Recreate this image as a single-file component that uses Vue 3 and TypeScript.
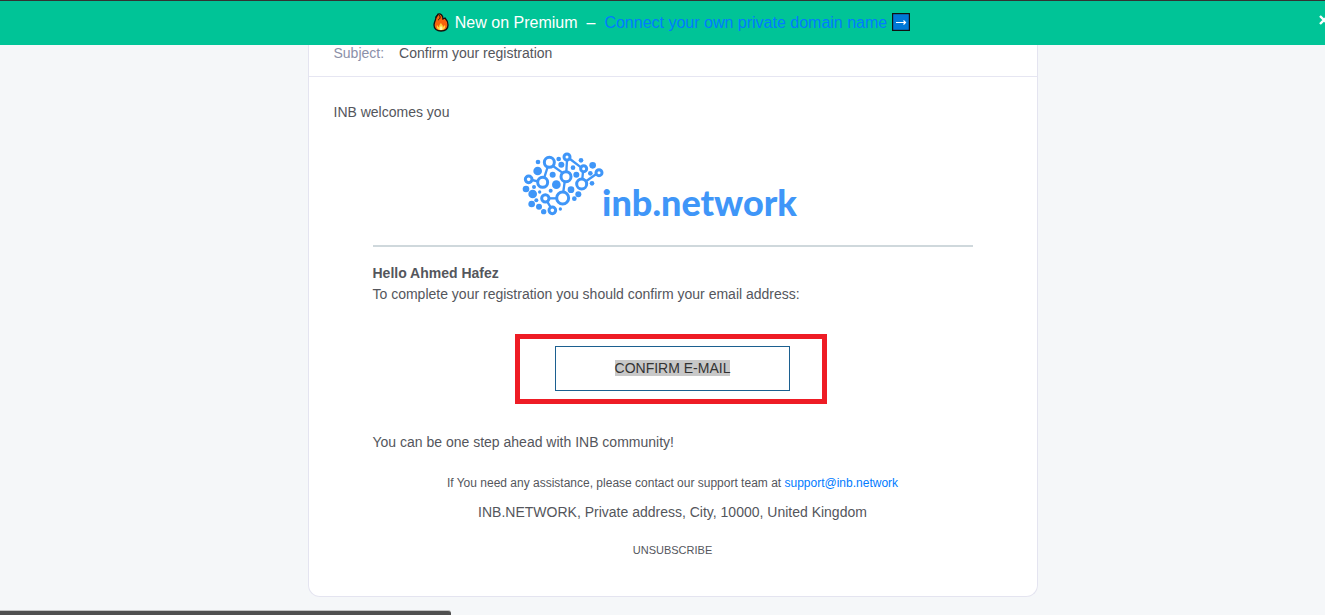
<script setup lang="ts">
type Point = [number, number, number]

const dots: Point[] = [
  [84, 66, 7], [146, 57, 7], [154, 74, 9], [83, 93, 13], [128, 104, 9],
  [139, 134, 13], [213, 61, 7], [248, 76, 10], [189, 83, 7], [199, 104, 9],
  [241, 100, 7], [246, 130, 7], [183, 149, 10], [205, 163, 9], [193, 176, 7],
  [122, 152, 6], [89, 156, 5], [72, 141, 6], [48, 147, 10], [68, 162, 13],
  [79, 181, 6], [65, 192, 10], [87, 200, 9], [101, 215, 8], [151, 207, 5],
]
const rings: Point[] = [
  [118, 67, 15], [171, 51, 9], [221, 86, 9], [267, 98, 9], [168, 110, 15],
  [215, 132, 15], [98, 127, 15], [56, 118, 10], [106, 175, 11], [158, 174, 18],
  [127, 211, 10],
]
const links: string[] = [
  'M66 120L83 124', 'M103 112L113 81', 'M129 78L157 98', 'M171 61L169 95',
  'M180 57L213 82', 'M219 95L217 117', 'M258 103L229 123', 'M164 125L160 156',
  'M117 175L140 175', 'M112 185L122 202',
]
</script>

<template>
  <div class="page">
    <aside class="banner">
      <svg class="flame" viewBox="0 0 16 19" aria-hidden="true">
        <path d="M5 1C8 0 10 3 10 6L12 5C14 7 15 10 15 12C15 16 12 18 8 18C4 18 1 16 1 12C1 9 3 7 3 4L4 3Z" fill="#f7630c" stroke="#111" stroke-width="1.3" />
        <path d="M3 5C3 2 5 1 6 2C8 4 7 6 5 7" fill="none" stroke="#111" stroke-width="1" />
        <path d="M4 12C5 13 5 14 6 14C6 12 7 11 8 10C9 12 10 12 10 14L12 12C13 15 11 17 8 17C5 17 3 15 4 12Z" fill="#ffd23c" />
        <path d="M8 13C9 14 10 15 9 17H7C6 15 7 14 8 13Z" fill="#fff4a3" />
      </svg>
      <strong class="lead">New on Premium</strong>
      <span class="dash">–</span>
      <a class="promo" href="#">Connect your own private domain name</a>
      <svg class="arrow" viewBox="0 0 18 18" aria-hidden="true">
        <rect x=".5" y=".5" width="17" height="17" fill="#0078d7" stroke="#111" stroke-width="1.4" />
        <path d="M4 9.5H13.5M11.5 7.5L13.5 9.5L11.5 11.5" fill="none" stroke="#fff" stroke-width="1.2" />
      </svg>
      <button class="close" type="button" aria-label="Close">
        <svg viewBox="0 0 10 10" aria-hidden="true"><path d="M1 1L9 9M9 1L1 9" stroke="#fff" stroke-width="2.4" /></svg>
      </button>
    </aside>

    <main class="mail">
      <header class="subject">
        <span class="label">Subject:</span>
        <span>Confirm your registration</span>
      </header>
      <div class="body">
        <p>INB welcomes you</p>
        <article class="letter">
          <div class="logo">
            <svg class="mark" viewBox="36 36 246 192" aria-hidden="true">
              <g fill="none" stroke="#3f96f8">
                <path v-for="d in links" :key="d" :d="d" stroke-width="7" />
                <circle v-for="([x, y, r], i) in rings" :key="i" :cx="x" :cy="y" :r="r" stroke-width="9" />
              </g>
              <circle v-for="([x, y, r], i) in dots" :key="i" :cx="x" :cy="y" :r="r" fill="#3f96f8" />
            </svg>
            <span class="wordmark">inb.network</span>
          </div>
          <hr class="rule">
          <p><b>Hello Ahmed Hafez</b></p>
          <p>To complete your registration you should confirm your email address:</p>
          <div class="action">
            <button class="confirm" type="button"><span class="selected">CONFIRM E-MAIL</span></button>
            <span class="highlight" aria-hidden="true"></span>
          </div>
          <p>You can be one step ahead with INB community!</p>
          <footer class="footer">
            <p class="help">If You need any assistance, please contact our support team at <a href="mailto:support@inb.network">support@inb.network</a></p>
            <p>INB.NETWORK, Private address, City, 10000, United Kingdom</p>
            <a class="unsubscribe" href="#">UNSUBSCRIBE</a>
          </footer>
        </article>
      </div>
    </main>
    <div class="status"></div>
  </div>
</template>

<style>
body {
  margin: 0;
  background: #f5f7f9;
}
</style>

<style scoped>
.page {
  box-sizing: border-box;
  min-height: 100vh;
  overflow: hidden;
  color: #54565c;
  font: 14px/21px "Liberation Sans", Arial, sans-serif;
}
p {
  margin: 0;
}
a {
  color: #007bff;
  text-decoration: none;
}
.banner {
  position: relative;
  box-sizing: border-box;
  display: flex;
  align-items: center;
  justify-content: center;
  height: 45px;
  padding: 0 0 2px 18px;
  overflow: hidden;
  border-top: 1px solid #333;
  background: #00c497;
  color: #fff;
  font-size: 16px;
  white-space: nowrap;
}
.flame {
  width: 16px;
  height: 19px;
  margin-right: 6px;
}
.lead {
  font-weight: 400;
}
.dash {
  margin: 0 9px;
}
.arrow {
  width: 18px;
  height: 18px;
  margin-left: 5px;
}
.close {
  position: absolute;
  top: 14px;
  right: -4px;
  width: 10px;
  height: 10px;
  padding: 0;
  border: 0;
  background: none;
}
.close svg {
  display: block;
}
.mail {
  box-sizing: border-box;
  width: calc(100% - 40px);
  max-width: 730px;
  margin: 0 auto 18px;
  position: relative;
  left: 10px;
  border: 1px solid #e4e4f0;
  border-top: 0;
  border-radius: 0 0 12px 12px;
  background: #fff;
}
.subject {
  display: flex;
  gap: 15px;
  padding: 0 25px 15px;
  border-bottom: 1px solid #e6e6f2;
  line-height: 16px;
}
.label {
  color: #8c90a8;
}
.body {
  padding: 25px 25px 37px;
}
.letter {
  max-width: 600px;
  margin: 0 auto;
}
.logo {
  display: flex;
  align-items: flex-end;
  justify-content: center;
  margin-top: 29px;
  padding-right: 26px;
}
.mark {
  width: 82px;
  height: 64px;
}
.wordmark {
  margin-left: -2px;
  color: #3f96f8;
  font: 900 36px/28px Lato, "Open Sans", sans-serif;
}
.rule {
  height: 2px;
  margin: 29px 0 16px;
  border: 0;
  background: #cfd8dc;
}
.action {
  position: relative;
  width: 235px;
  margin: 41px auto;
}
.confirm {
  display: block;
  width: 100%;
  height: 45px;
  padding: 0;
  border: 1px solid #1c6090;
  background: #fff;
  color: #333;
  font: inherit;
}
.selected {
  background: #c8c8c8;
}
.highlight {
  position: absolute;
  inset: -12px -37px -13px -40px;
  border: 5px solid #ee1c25;
  pointer-events: none;
}
.footer {
  margin-top: 21px;
  text-align: center;
}
.help {
  margin-bottom: 10px;
  font-size: 12px;
  line-height: 18px;
}
.unsubscribe {
  display: block;
  margin-top: 18px;
  color: #54565c;
  font-size: 11px;
  line-height: 18px;
}
.status {
  position: fixed;
  bottom: 0;
  left: 0;
  width: 34%;
  height: 4px;
  border-top: 1px solid #c4c4c4;
  border-top-right-radius: 3px;
  background: #505050;
}
</style>
